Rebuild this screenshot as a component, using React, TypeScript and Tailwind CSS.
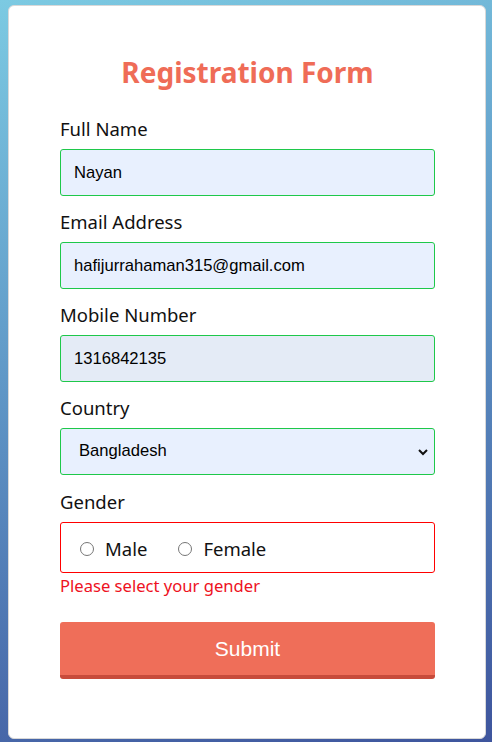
import React from "react";

const labelCls = "block text-[18.5px] leading-[24px] text-[#111] mb-2";
const inputCls =
  "block w-full h-[47px] px-[13px] rounded-[3px] border border-[#1ec84a] bg-[#e8f0fe] text-[16.6px] text-black outline-none";
const arial = { fontFamily: '"Liberation Sans", Arial, sans-serif' };

export default function App() {
  return (
    <div
      className="min-h-[742px] w-full bg-[linear-gradient(165deg,#7ccae2_0%,#5f96c6_45%,#3e559d_100%)] pt-[5px] pl-[8px] pr-[6px] pb-[3px]"
      style={{ fontFamily: '"Noto Sans", "Open Sans", sans-serif' }}
    >
      <div className="h-[734px] rounded-[6px] border border-[#d8d8d8] bg-white pl-[51px] pr-[50px] pt-[46px]">
        <h1 className="text-center text-[28px] leading-[40px] font-bold text-[#ef6c57] mb-[25px]">
          Registration Form
        </h1>

        <form onSubmit={(e) => e.preventDefault()}>
          <div className="mb-[14px]">
            <label className={labelCls}>Full Name</label>
            <input className={inputCls} defaultValue="Nayan" style={arial} />
          </div>

          <div className="mb-[14px]">
            <label className={labelCls}>Email Address</label>
            <input className={inputCls} defaultValue="hafijurrahaman315@gmail.com" style={arial} />
          </div>

          <div className="mb-[14px]">
            <label className={labelCls}>Mobile Number</label>
            <input className={inputCls + " !bg-[#e4ebf6]"} defaultValue="1316842135" style={arial} />
          </div>

          <div className="mb-[15px]">
            <label className={labelCls}>Country</label>
            <div className="relative">
              <select
                className="block w-full h-[47px] pl-[18px] pr-8 rounded-[3px] border border-[#1ec84a] bg-[#e8f0fe] text-[16.6px] text-black outline-none appearance-none"
                defaultValue="Bangladesh"
                style={arial}
              >
                <option>Bangladesh</option>
                <option>India</option>
                <option>Pakistan</option>
              </select>
              <svg
                className="pointer-events-none absolute right-[7px] top-1/2 -translate-y-1/2"
                width="10"
                height="8"
                viewBox="0 0 10 8"
              >
                <path d="M1 2 L5 6 L9 2" fill="none" stroke="#111" strokeWidth="2" />
              </svg>
            </div>
          </div>

          <div>
            <label className={labelCls}>Gender</label>
            <div className="flex items-center h-[51px] rounded-[3px] border border-[#ff0000] pl-[19px] pt-[2px] text-[18.5px] text-[#111]">
              <label className="flex items-center mr-[31px]">
                <span className="inline-block w-[14px] h-[14px] rounded-full border border-[#767676] mr-[11px]"></span>
                Male
              </label>
              <label className="flex items-center">
                <span className="inline-block w-[14px] h-[14px] rounded-full border border-[#767676] mr-[11px]"></span>
                Female
              </label>
            </div>
            <p className="text-[16.6px] leading-[26px] text-[#ee1122]">
              Please select your gender
            </p>
          </div>

          <button
            type="submit"
            className="mt-[23px] block w-full h-[57px] rounded-[3px] bg-[#ef6e59] border-b-[4px] border-[#c84b3b] text-white text-[21px]"
            style={arial}
          >
            Submit
          </button>
        </form>
      </div>
    </div>
  );
}
